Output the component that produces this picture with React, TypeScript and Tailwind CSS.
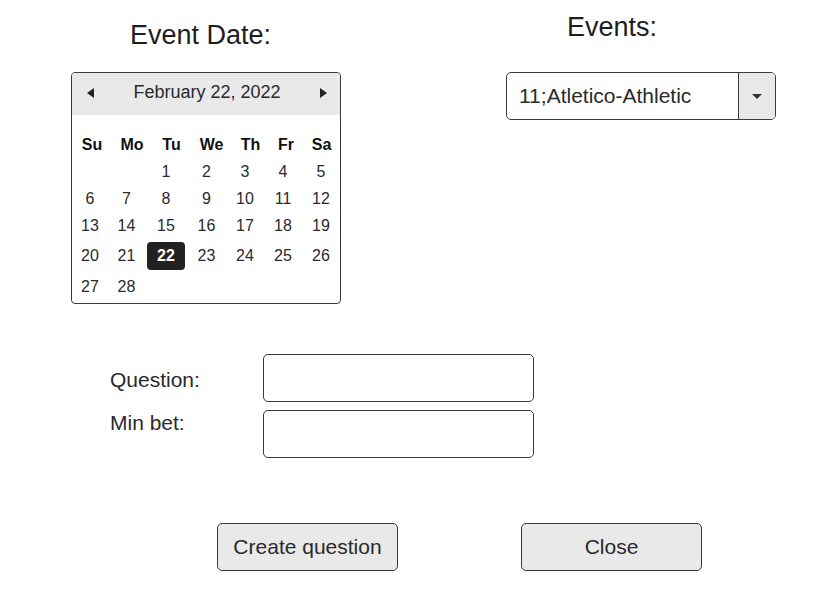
import React from 'react';

const weeks: (number | null)[][] = [
  [null, null, 1, 2, 3, 4, 5],
  [6, 7, 8, 9, 10, 11, 12],
  [13, 14, 15, 16, 17, 18, 19],
  [20, 21, 22, 23, 24, 25, 26],
  [27, 28, null, null, null, null, null],
];

const dayNames = ['Su', 'Mo', 'Tu', 'We', 'Th', 'Fr', 'Sa'];

function Calendar() {
  return (
    <div className="mt-[22px] w-[270px] rounded-[4px] border border-[#3a3a3a] bg-white">
      <div className="flex h-[42px] items-center justify-between rounded-t-[3px] bg-[#e9e9e9] pb-[3px] pl-[15px] pr-[13px]">
        <svg width="7" height="10" viewBox="0 0 7 10" className="mt-[1px]">
          <path d="M7 0 L0 5 L7 10 Z" fill="#222" />
        </svg>
        <span className="text-[18px] text-[#2a2a2a]">February 22, 2022</span>
        <svg width="7" height="10" viewBox="0 0 7 10" className="mt-[1px]">
          <path d="M0 0 L7 5 L0 10 Z" fill="#222" />
        </svg>
      </div>

      <div className="pb-[3px] pt-[16px] text-[16px]">
        <div className="grid h-[27px] grid-cols-[40px_40px_39px_41px_37px_34px_37px] items-center font-bold text-[#111]">
          {dayNames.map((d) => (
            <span key={d} className="text-center">{d}</span>
          ))}
        </div>
        {weeks.map((week, wi) => (
          <div
            key={wi}
            className={`grid grid-cols-[36px_37px_42px_39px_38px_38px_38px] items-center text-[#2a2a2a] ${wi === 3 ? 'h-[34px]' : 'h-[27px]'}`}
          >
            {week.map((day, di) => (
              <div key={di} className="flex justify-center">
                {day === 22 ? (
                  <span className="inline-flex h-[28px] w-[38px] items-center justify-center rounded-[4px] bg-[#222] font-bold text-white">
                    22
                  </span>
                ) : (
                  <span>{day ?? ''}</span>
                )}
              </div>
            ))}
          </div>
        ))}
      </div>
    </div>
  );
}

export default function App() {
  return (
    <div className="h-[611px] w-[839px] bg-white font-['Liberation_Sans',Arial,sans-serif] text-[#2a2a2a]">
      <div className="flex">
        <div className="ml-[71px] flex w-[270px] flex-col">
          <h2 className="mt-[20px] pl-[59px] text-[27px] leading-[30px] text-[#1e1e1e]">Event Date:</h2>
          <Calendar />
        </div>

        <div className="ml-[165px] flex w-[270px] flex-col">
          <h2 className="mt-[12px] pl-[61px] text-[27px] leading-[30px] text-[#1e1e1e]">Events:</h2>
          <div className="mt-[30px] flex h-[48px] rounded-[5px] border border-[#3a3a3a] bg-white">
            <div className="flex flex-1 items-center pl-[12px] text-[21px]">11;Atletico-Athletic</div>
            <div className="flex w-[37px] items-center justify-center rounded-r-[4px] border-l border-[#3a3a3a] bg-[#e9e9e9]">
              <svg width="10" height="5" viewBox="0 0 10 5">
                <path d="M0 0 L10 0 L5 5 Z" fill="#333" />
              </svg>
            </div>
          </div>
        </div>
      </div>

      <div className="ml-[110px] mt-[50px] grid grid-cols-[153px_271px] gap-y-[8px] text-[21px]">
        <label className="mt-[14px] self-start leading-[24px]">Question:</label>
        <input className="h-[48px] w-[271px] rounded-[5px] border border-[#3a3a3a] bg-white px-3 outline-none" />
        <label className="mt-[1px] self-start leading-[24px]">Min bet:</label>
        <input className="h-[48px] w-[271px] rounded-[5px] border border-[#3a3a3a] bg-white px-3 outline-none" />
      </div>

      <div className="ml-[217px] mt-[65px] flex gap-[123px]">
        <button className="h-[48px] w-[181px] rounded-[5px] border border-[#3a3a3a] bg-[#e9e9e9] text-[21px] text-[#2a2a2a]">
          Create question
        </button>
        <button className="h-[48px] w-[181px] rounded-[5px] border border-[#3a3a3a] bg-[#e9e9e9] text-[21px] text-[#2a2a2a]">
          Close
        </button>
      </div>
    </div>
  );
}
